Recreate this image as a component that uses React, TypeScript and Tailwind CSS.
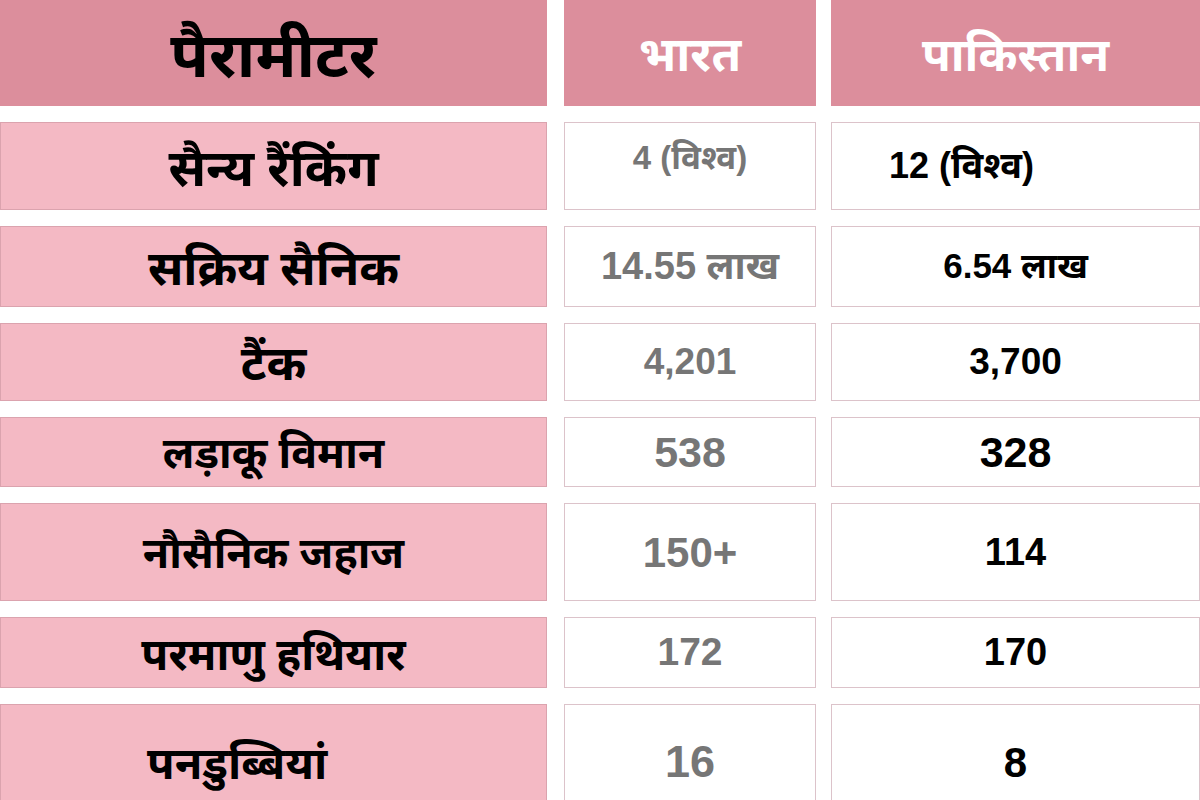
import React from "react"

interface Row {
  label: string
  india: string
  pak: string
  height: string
  labelClass?: string
  indiaClass?: string
  pakClass?: string
}

const ROWS: Row[] = [
  { label: "सैन्य रैंकिंग", india: "4 (विश्व)", pak: "12 (विश्व)", height: "h-[88px]", labelClass: "text-[51px]", indiaClass: "text-[33px] pb-4", pakClass: "text-[36px] justify-start pl-[57px]" },
  { label: "सक्रिय सैनिक", india: "14.55 लाख", pak: "6.54 लाख", height: "h-[81px]", labelClass: "text-[48px]", indiaClass: "text-[38px]", pakClass: "text-[35px]" },
  { label: "टैंक", india: "4,201", pak: "3,700", height: "h-[78px]", labelClass: "text-[48px]", indiaClass: "text-[37px]", pakClass: "text-[37px]" },
  { label: "लड़ाकू विमान", india: "538", pak: "328", height: "h-[70px]", labelClass: "text-[43px]", indiaClass: "text-[43px]", pakClass: "text-[43px]" },
  { label: "नौसैनिक जहाज", india: "150+", pak: "114", height: "h-[98px]", labelClass: "text-[43px]", indiaClass: "text-[42px]", pakClass: "text-[38px]" },
  { label: "परमाणु हथियार", india: "172", pak: "170", height: "h-[71px]", labelClass: "text-[44px]", indiaClass: "text-[39px]", pakClass: "text-[38px]" },
  { label: "पनडुब्बियां", india: "16", pak: "8", height: "h-[116px]", labelClass: "text-[45px] justify-start pl-[146px]", indiaClass: "text-[45px]", pakClass: "text-[42px]" },
]

const deva = "font-['Noto_Sans','Noto_Sans_Devanagari','Liberation_Sans',sans-serif]"
const nums = "font-['Liberation_Sans','Noto_Sans','Noto_Sans_Devanagari',sans-serif]"

export default function App() {
  return (
    <div className="w-[1200px] h-[800px] overflow-hidden bg-white flex flex-col gap-4">
      <div className="flex h-[106px] shrink-0">
        <div className={`w-[547px] bg-[#dc8e9c] flex items-center justify-center text-[63px] font-bold text-black ${deva}`}>
          पैरामीटर
        </div>
        <div className={`w-[252px] ml-[17px] bg-[#dc8e9c] flex items-center justify-center text-[48px] font-bold text-white ${deva}`}>
          भारत
        </div>
        <div className={`w-[369px] ml-[15px] bg-[#dc8e9c] flex items-center justify-center text-[47px] font-bold text-white ${deva}`}>
          पाकिस्तान
        </div>
      </div>

      {ROWS.map((row) => (
        <div key={row.label} className={`flex shrink-0 ${row.height}`}>
          <div
            className={`w-[547px] bg-[#f4b9c4] border border-[#dba3ae] flex items-center justify-center font-bold text-black ${deva} ${row.labelClass?.includes("justify-start") ? "" : "justify-center"} ${row.labelClass ?? ""}`}
          >
            {row.label}
          </div>
          <div
            className={`w-[252px] ml-[17px] bg-white border border-[#dcc3ca] flex items-center justify-center font-bold text-[#767676] ${nums} ${row.indiaClass ?? ""}`}
          >
            {row.india}
          </div>
          <div
            className={`w-[369px] ml-[15px] bg-white border border-[#dcc3ca] flex items-center font-bold text-black ${nums} ${row.pakClass?.includes("justify-start") ? "" : "justify-center"} ${row.pakClass ?? ""}`}
          >
            {row.pak}
          </div>
        </div>
      ))}
    </div>
  )
}
